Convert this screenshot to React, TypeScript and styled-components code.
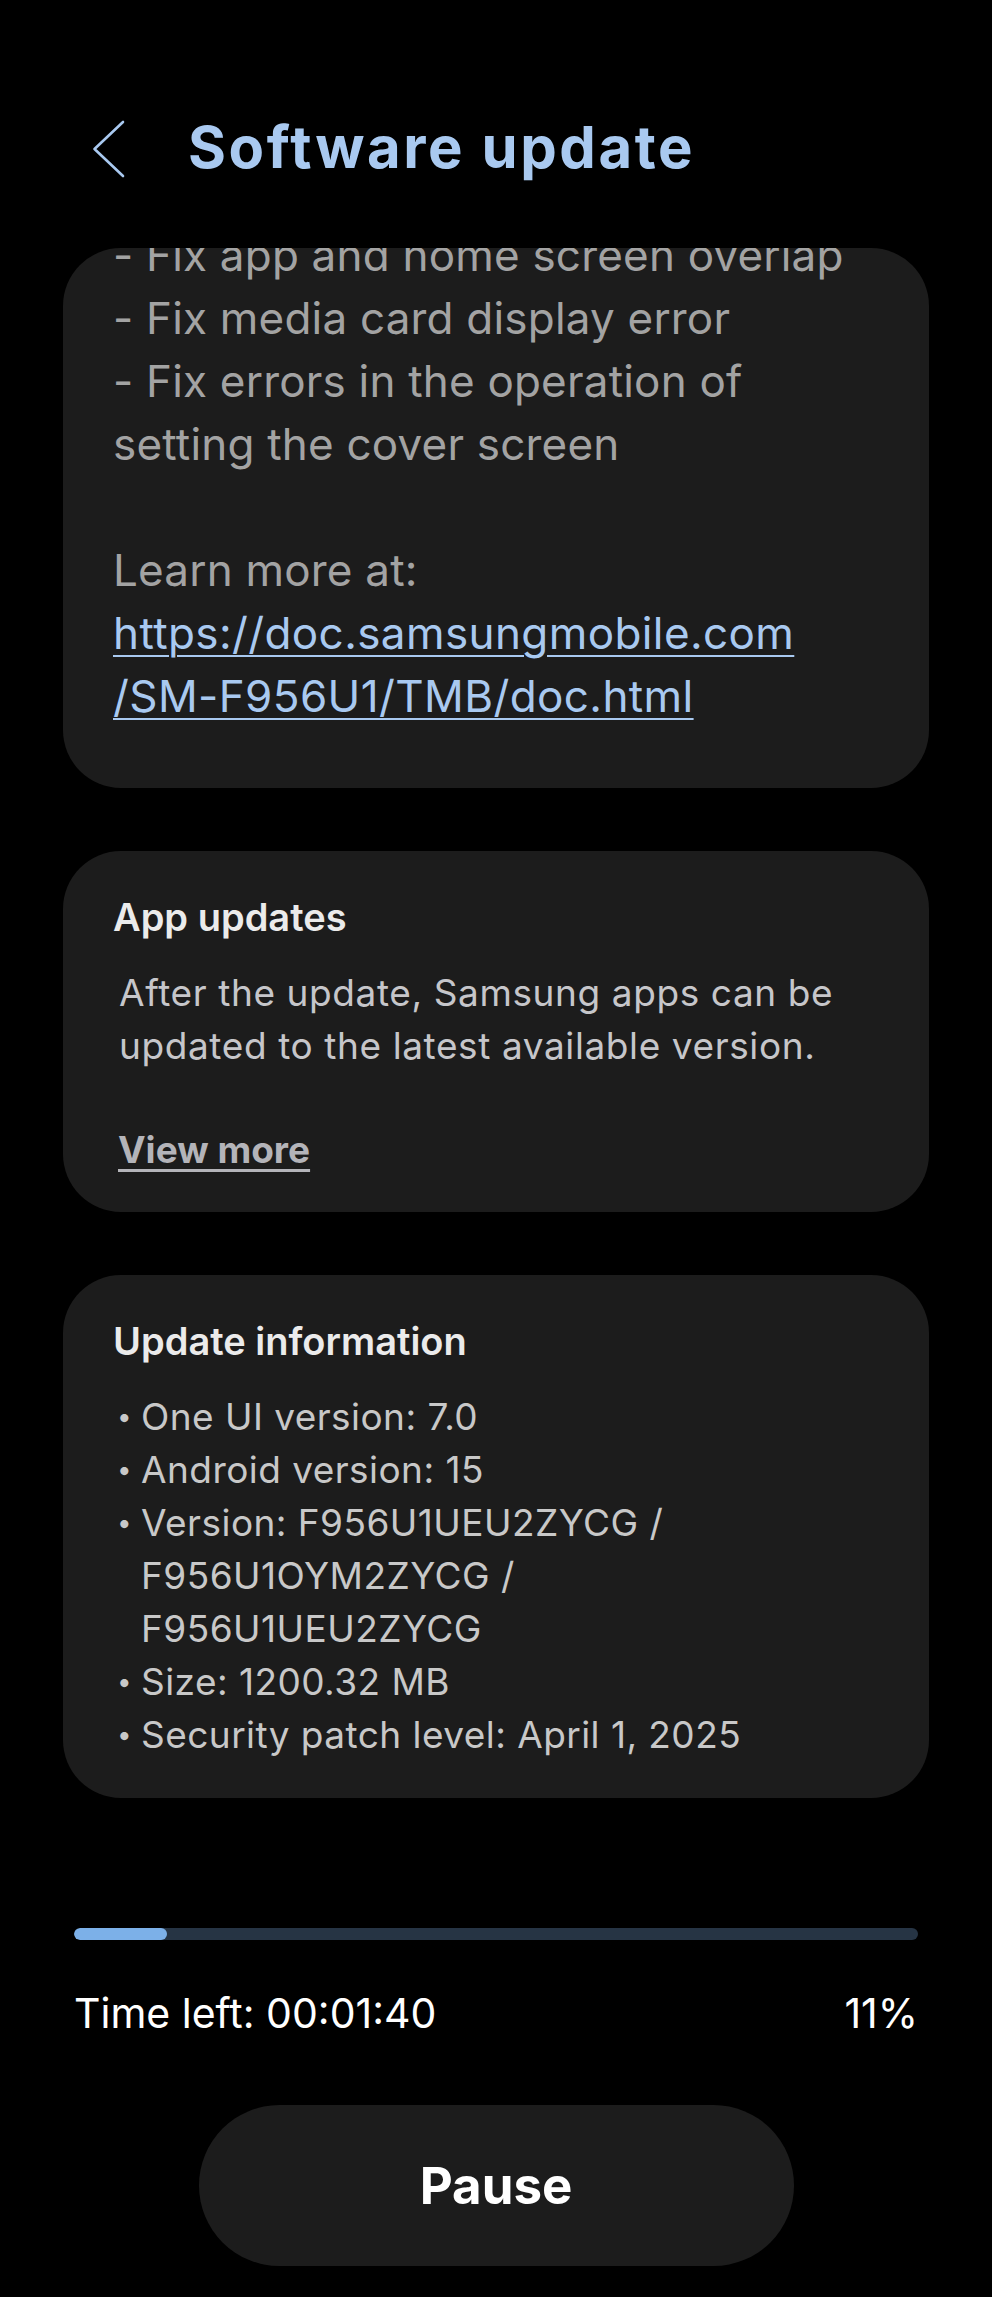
import styled, { createGlobalStyle } from "styled-components";

const BLUE = "#a9c9f0";
const CARD = "#1c1c1c";

const GlobalStyle = createGlobalStyle`
  html, body {
    margin: 0;
    padding: 0;
    background: #000;
  }
  body {
    font-family: Inter, "Noto Sans", Roboto, sans-serif;
    -webkit-font-smoothing: antialiased;
  }
`;

const NOTES = [
  "- Fix app and home screen overlap",
  "- Fix media card display error",
  "- Fix errors in the operation of",
  "setting the cover screen",
];

const INFO = [
  "One UI version: 7.0",
  "Android version: 15",
  "Version: F956U1UEU2ZYCG /\nF956U1OYM2ZYCG /\nF956U1UEU2ZYCG",
  "Size: 1200.32 MB",
  "Security patch level: April 1, 2025",
];

const PROGRESS = 11;

export default function App() {
  return (
    <Screen>
      <GlobalStyle />
      <Header>
        <BackButton aria-label="Back">
          <svg width="34" height="58" viewBox="0 0 34 58" fill="none">
            <path
              d="M31 2 L2.5 29 L31 56"
              stroke={BLUE}
              strokeWidth="2.6"
              strokeLinecap="round"
              strokeLinejoin="round"
            />
          </svg>
        </BackButton>
        <Title>Software update</Title>
      </Header>

      <ScrollArea>
        <NotesCard>
          {NOTES.map((line) => (
            <NoteLine key={line}>{line}</NoteLine>
          ))}
          <NoteLine>&nbsp;</NoteLine>
          <NoteLine>Learn more at:</NoteLine>
          <Link href="#">
            https://doc.samsungmobile.com
            <br />
            /SM-F956U1/TMB/doc.html
          </Link>
        </NotesCard>

        <Card>
          <CardTitle>App updates</CardTitle>
          <CardBody>
            After the update, Samsung apps can be
            <br />
            updated to the latest available version.
          </CardBody>
          <ViewMore href="#">View more</ViewMore>
        </Card>

        <Card>
          <CardTitle>Update information</CardTitle>
          <InfoList>
            {INFO.map((item) => (
              <InfoItem key={item}>
                <Bullet>•</Bullet>
                <InfoText>{item}</InfoText>
              </InfoItem>
            ))}
          </InfoList>
        </Card>
      </ScrollArea>

      <Footer>
        <Track>
          <Fill style={{ width: `${PROGRESS}%` }} />
        </Track>
        <StatusRow>
          <span>Time left: 00:01:40</span>
          <span>{PROGRESS}%</span>
        </StatusRow>
        <PauseButton>Pause</PauseButton>
      </Footer>
    </Screen>
  );
}

const Screen = styled.div`
  width: 992px;
  height: 2297px;
  background: #000;
  display: flex;
  flex-direction: column;
  overflow: hidden;
`;

const Header = styled.header`
  display: flex;
  align-items: center;
  height: 70px;
  margin-top: 112px;
  padding-left: 92px;
  gap: 62px;
`;

const BackButton = styled.button`
  display: flex;
  padding: 0;
  border: none;
  background: none;
  margin-top: 4px;
`;

const Title = styled.h1`
  margin: 0;
  font-size: 58px;
  line-height: 70px;
  font-weight: 700;
  color: ${BLUE};
  letter-spacing: 2.6px;
`;

const ScrollArea = styled.main`
  margin: 66px 63px 0;
  height: 1552px;
  border-radius: 58px 58px 0 0;
  overflow: hidden;
  display: flex;
  flex-direction: column;
  gap: 63px;
`;

const Card = styled.section`
  background: ${CARD};
  border-radius: 58px;
  padding: 41px 50px 37px;
  display: flex;
  flex-direction: column;
`;

const NotesCard = styled(Card)`
  margin-top: -24px;
  padding-top: 0;
  padding-bottom: 60px;
  border-radius: 0 0 58px 58px;
`;

const NoteLine = styled.div`
  font-size: 44px;
  line-height: 63px;
  letter-spacing: 0.2px;
  color: #a3a3a3;
`;

const Link = styled.a`
  font-size: 44px;
  line-height: 63px;
  letter-spacing: 0.4px;
  color: ${BLUE};
  text-decoration: underline;
  text-decoration-thickness: 2px;
  text-underline-offset: 6px;
`;

const CardTitle = styled.h2`
  margin: 0;
  font-size: 38px;
  line-height: 50px;
  font-weight: 600;
  color: #ebebeb;
`;

const CardBody = styled.p`
  margin: 24px 0 0 6px;
  font-size: 37px;
  line-height: 53px;
  letter-spacing: 0.6px;
  color: #c6c6ca;
`;

const ViewMore = styled.a`
  align-self: flex-start;
  margin: 53px 0 0 5px;
  font-size: 37px;
  line-height: 50px;
  font-weight: 700;
  color: #b4b4b9;
  text-decoration: underline;
  text-decoration-thickness: 3px;
  text-underline-offset: 6px;
`;

const InfoList = styled.ul`
  list-style: none;
  margin: 24px 0 0;
  padding: 0 0 0 4px;
`;

const InfoItem = styled.li`
  display: flex;
  font-size: 37px;
  line-height: 53px;
  letter-spacing: 0.45px;
  color: #c8c8c8;
`;

const Bullet = styled.span`
  width: 24px;
  flex-shrink: 0;
  font-size: 26px;
`;

const InfoText = styled.span`
  white-space: pre-line;
`;

const Footer = styled.footer`
  padding: 0 74px;
  margin-top: 128px;
  display: flex;
  flex-direction: column;
`;

const Track = styled.div`
  height: 12px;
  border-radius: 6px;
  background: #263444;
  overflow: hidden;
`;

const Fill = styled.div`
  height: 100%;
  border-radius: 6px;
  background: #7cb0e8;
`;

const StatusRow = styled.div`
  display: flex;
  justify-content: space-between;
  margin-top: 48px;
  font-size: 41px;
  line-height: 50px;
  color: #fff;
`;

const PauseButton = styled.button`
  align-self: center;
  margin-top: 67px;
  width: 595px;
  height: 161px;
  border: none;
  border-radius: 81px;
  background: ${CARD};
  color: #fff;
  font-family: inherit;
  font-size: 51px;
  font-weight: 700;
`;
